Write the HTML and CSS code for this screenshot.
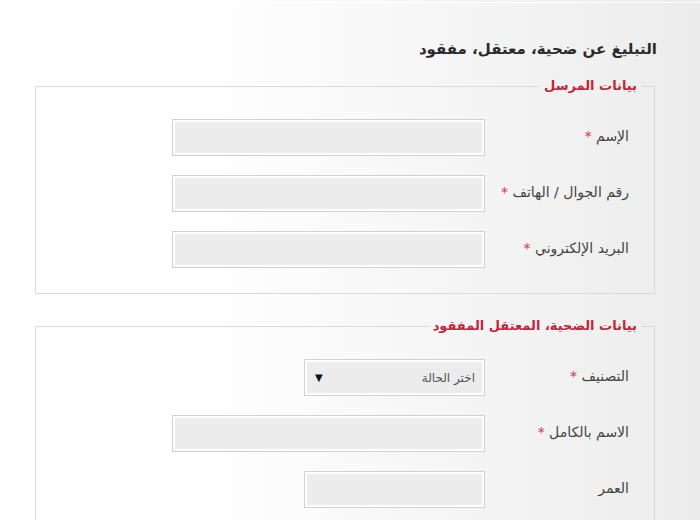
FILE: index.html
```html
<!DOCTYPE html>
<html lang="ar" dir="rtl">
<head>
<meta charset="utf-8">
<title>التبليغ عن ضحية، معتقل، مفقود</title>
<link rel="stylesheet" href="styles.css">
</head>
<body>
<div class="topline"></div>
<main class="page">
  <h1 class="title">التبليغ عن ضحية، معتقل، مفقود</h1>

  <fieldset class="group">
    <legend class="legend">بيانات المرسل</legend>
    <div class="fields">
      <div class="row">
        <label class="label">الإسم <span class="req">*</span></label>
        <div class="input"></div>
      </div>
      <div class="row">
        <label class="label">رقم الجوال / الهاتف <span class="req">*</span></label>
        <div class="input"></div>
      </div>
      <div class="row">
        <label class="label">البريد الإلكتروني <span class="req">*</span></label>
        <div class="input"></div>
      </div>
    </div>
  </fieldset>

  <fieldset class="group group-second">
    <legend class="legend">بيانات الضحية، المعتقل المفقود</legend>
    <div class="fields">
      <div class="row">
        <label class="label">التصنيف <span class="req">*</span></label>
        <div class="input input-short select">
          <span class="select-text">اختر الحالة</span>
          <span class="select-arrow">▼</span>
        </div>
      </div>
      <div class="row">
        <label class="label">الاسم بالكامل <span class="req">*</span></label>
        <div class="input"></div>
      </div>
      <div class="row">
        <label class="label">العمر</label>
        <div class="input input-short"></div>
      </div>
    </div>
  </fieldset>
</main>
</body>
</html>
```

FILE: styles.css
```css
html, body {
  margin: 0;
  padding: 0;
}

body {
  width: 700px;
  height: 520px;
  overflow: hidden;
  background: linear-gradient(to right, #ffffff 0%, #ffffff 28%, #ececec 100%);
  font-family: "DejaVu Sans", "Noto Sans", sans-serif;
  direction: rtl;
}

.topline {
  height: 1px;
  margin-top: 2px;
  background: linear-gradient(to right, rgba(255,255,255,0) 25%, #ffffff 40%, #ffffff 100%);
}

.page {
  padding: 0 45px 0 35px;
}

.title {
  margin: 34px -2px 0 0;
  font-size: 15px;
  line-height: 24px;
  font-weight: bold;
  color: #2b2b2b;
}

.group {
  margin: 15px 0 0 0;
  padding: 0;
  border: 1px solid #dadada;
  min-inline-size: 0;
}

.group-second {
  margin-top: 22px;
}

.legend {
  margin-right: 13px;
  padding: 0 4px;
  font-size: 13px;
  line-height: 20px;
  font-weight: bold;
  color: #c3263a;
}

.fields {
  display: flex;
  flex-direction: column;
  gap: 19px;
  padding: 23px 25px 25px 0;
}

.row {
  display: flex;
  align-items: center;
  height: 37px;
}

.label {
  flex: none;
  width: 144px;
  font-size: 14px;
  line-height: 20px;
  padding-bottom: 4px;
  color: #444;
}

.req {
  color: #d0333f;
  font-size: 14px;
}

.input {
  flex: none;
  box-sizing: border-box;
  width: 313px;
  height: 37px;
  background: #ececec;
  border: 1px solid #d2d2d2;
  box-shadow: inset 0 0 0 2px #ffffff;
}

.input-short {
  width: 181px;
}

.select {
  display: flex;
  align-items: center;
  justify-content: space-between;
  padding: 0 9px 0 10px;
}

.select-text {
  font-size: 12px;
  color: #555;
}

.select-arrow {
  font-size: 10px;
  color: #111;
}
```
